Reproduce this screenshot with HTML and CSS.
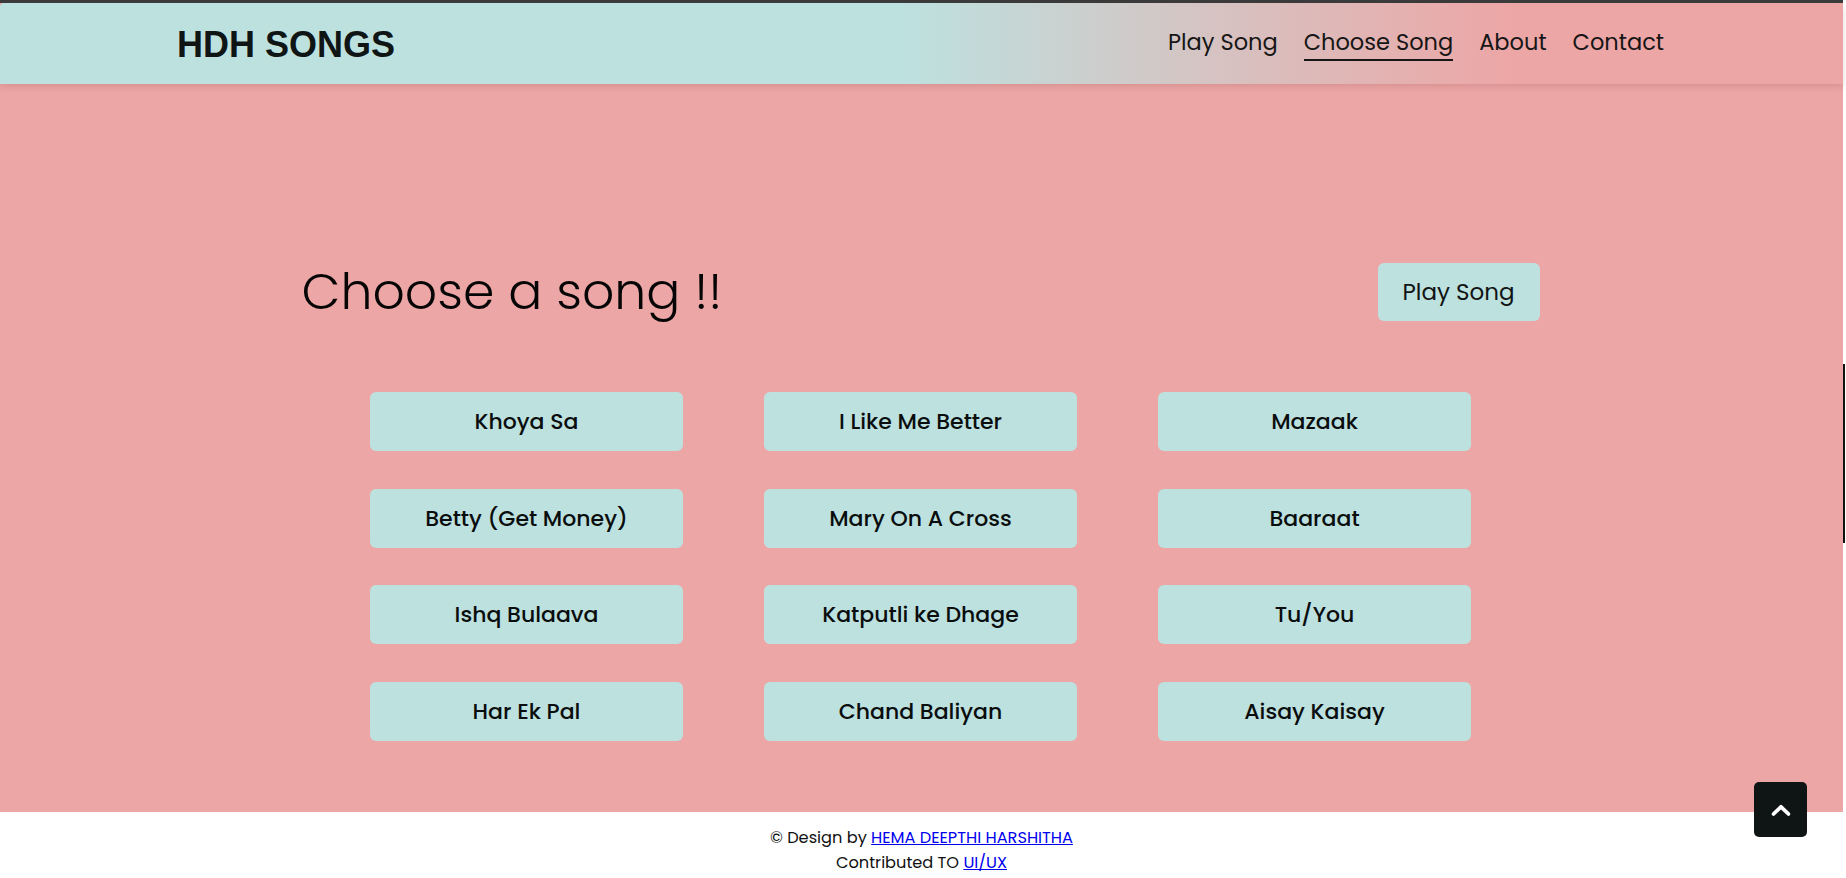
FILE: index.html
```html
<!DOCTYPE html>
<html lang="en">
<head>
<meta charset="utf-8">
<title>HDH Songs - Choose Song</title>
<link rel="stylesheet" href="styles.css">
</head>
<body>
<div class="page">
  <header class="topbar">
    <div class="topbar-inner">
      <div class="brand">HDH SONGS</div>
      <nav class="nav">
        <a class="nav-link" href="#">Play Song</a>
        <a class="nav-link active" href="#">Choose Song</a>
        <a class="nav-link" href="#">About</a>
        <a class="nav-link" href="#">Contact</a>
      </nav>
    </div>
  </header>

  <main class="main">
    <div class="heading-row">
      <h1 class="title">Choose a song !!</h1>
      <button class="play-btn">Play Song</button>
    </div>
    <div class="songs">
      <button class="song">Khoya Sa</button>
      <button class="song">I Like Me Better</button>
      <button class="song">Mazaak</button>
      <button class="song">Betty (Get Money)</button>
      <button class="song">Mary On A Cross</button>
      <button class="song">Baaraat</button>
      <button class="song">Ishq Bulaava</button>
      <button class="song">Katputli ke Dhage</button>
      <button class="song">Tu/You</button>
      <button class="song">Har Ek Pal</button>
      <button class="song">Chand Baliyan</button>
      <button class="song">Aisay Kaisay</button>
    </div>
  </main>

  <footer class="footer">
    <p class="footer-line">© Design by <a href="#">HEMA DEEPTHI HARSHITHA</a></p>
    <p class="footer-line">Contributed TO <a href="#">UI/UX</a></p>
  </footer>
</div>

<a class="to-top" href="#" aria-label="Back to top">
  <svg width="22" height="14" viewBox="0 0 22 14"><path d="M3.5 11 L11 3.8 L18.5 11" fill="none" stroke="#fff" stroke-width="3.8" stroke-linecap="round" stroke-linejoin="round"/></svg>
</a>
<div class="scroll-thumb"></div>
</body>
</html>
```

FILE: styles.css
```css
* { box-sizing: border-box; }

html, body {
  margin: 0;
  padding: 0;
  background: #ffffff;
}

body {
  font-family: "Poppins", "Open Sans", "DejaVu Sans", sans-serif;
  color: #111414;
}

.page {
  width: calc(100% - 3px);
  border-top: 3px solid #3b3b3b;
  background: #eda6a6;
}

.topbar {
  height: 81px;
  background: linear-gradient(to right, #bde1df 0%, #bde1df 49%, #eda6a6 82%, #eda6a6 100%);
  box-shadow: 0 3px 6px rgba(120, 60, 60, 0.18);
  border-top-left-radius: 4px;
  position: relative;
  z-index: 1;
}

.topbar-inner {
  height: 100%;
  padding: 0 179px 0 177px;
  display: flex;
  align-items: center;
  justify-content: space-between;
}

.brand {
  font-family: "Liberation Sans", Arial, sans-serif;
  font-weight: 700;
  font-size: 36px;
  color: #0f1515;
  margin-top: 2px;
}

.nav {
  display: flex;
  gap: 26px;
  align-items: center;
}

.nav-link {
  font-size: 22.5px;
  color: #161616;
  text-decoration: none;
  line-height: 30px;
  padding-bottom: 2px;
  border-bottom: 2px solid transparent;
}

.nav-link.active {
  border-bottom-color: #161616;
}

.main {
  padding: 179px 0 71px;
  display: flex;
  flex-direction: column;
  align-items: center;
}

.heading-row {
  width: 1238px;
  display: flex;
  align-items: center;
  justify-content: space-between;
  height: 58px;
  margin-right: 2px;
}

.title {
  margin: 0;
  font-weight: 300;
  font-size: 50.5px;
  line-height: 58px;
  color: #050505;
}

.play-btn {
  width: 162px;
  height: 58px;
  border: none;
  border-radius: 6px;
  background: #bde1df;
  font-family: inherit;
  font-size: 23px;
  color: #111414;
  cursor: pointer;
}

.songs {
  margin-top: 71px;
  margin-right: 2px;
  display: grid;
  grid-template-columns: repeat(3, 313px);
  column-gap: 81px;
  row-gap: 37.5px;
}

.song {
  height: 59px;
  border: none;
  border-radius: 6px;
  background: #bde1df;
  font-family: inherit;
  font-weight: 500;
  font-size: 22px;
  color: #0a0d0d;
  cursor: pointer;
}

.footer {
  background: #ffffff;
  padding: 13px 0 4px;
  text-align: center;
}

.footer-line {
  margin: 0;
  font-size: 16.2px;
  line-height: 25px;
  color: #111;
}

.footer-line a {
  color: #0000ee;
}

.to-top {
  position: fixed;
  right: 39px;
  bottom: 41px;
  width: 53px;
  height: 55px;
  border-radius: 5px;
  background: #0f1515;
  display: flex;
  align-items: center;
  justify-content: center;
}

.scroll-thumb {
  position: fixed;
  right: 1px;
  top: 364px;
  width: 2px;
  height: 179px;
  background: #111;
}
```
